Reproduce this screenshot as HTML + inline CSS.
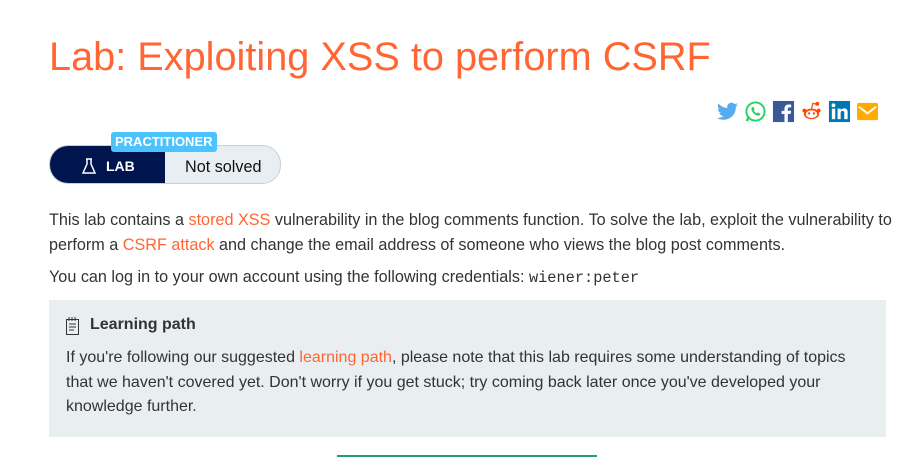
<!DOCTYPE html>
<html><head><style>
body{margin:0;width:906px;height:457px;overflow:hidden;background:#fff;font-family:"Liberation Sans",sans-serif;color:#333;position:relative}
h1{position:absolute;left:49px;top:35px;margin:0;font-weight:normal;font-size:39.7px;color:#ff6633;white-space:nowrap}
.soc{position:absolute;top:100px;left:716px;display:flex;gap:5px}
.soc div{width:23px;height:23px}
.badge{position:absolute;left:49px;top:145px;width:230px;height:37px;border:1px solid #c8ced3;border-radius:19px;background:#e8eef1;overflow:hidden}
.badge .lab{position:absolute;left:0;top:0;width:115px;height:37px;background:#00144d;color:#fff;font-weight:bold;font-size:14px;line-height:40px}
.badge .ns{position:absolute;left:135px;top:3px;line-height:37px;font-size:16.2px;color:#111}
.prac{position:absolute;left:111px;top:132px;background:#4cc3ff;color:#fff;font-weight:bold;font-size:13px;padding:1px 4px;border-radius:3px;line-height:18px}
p{position:absolute;left:49px;margin:0;font-size:16.2px;line-height:24.5px;width:850px}
a{color:#ff6633;text-decoration:none}
.box{position:absolute;left:49px;top:300px;width:837px;height:137px;background:#e9eef1}
.box p{left:17px;width:800px;font-size:16px}
code{font-family:"Liberation Mono",monospace;font-size:15.3px}
</style></head><body>
<h1>Lab: Exploiting XSS to perform CSRF</h1>
<div class="soc">
<div><svg width="23" height="23" viewBox="0 0 24 24"><path fill="#55acee" d="M23 5c-.8.4-1.7.6-2.6.7.9-.6 1.6-1.4 2-2.5-.9.5-1.9.9-2.9 1.1a4.5 4.5 0 0 0-7.7 4.1C8 8.2 4.7 6.4 2.5 3.7c-1.3 2.2-.4 4.7 1.4 6-.7 0-1.4-.2-2-.6 0 2.2 1.6 4 3.6 4.4-.7.2-1.4.2-2 .1.6 1.800 2.3 3.1 4.2 3.1A9 9 0 0 1 1 18.6 12.8 12.8 0 0 0 20.7 7.2c.9-.6 1.7-1.4 2.3-2.2z"/></svg></div>
<div><svg width="23" height="23" viewBox="0 0 24 24"><circle cx="12" cy="12" r="9.5" fill="none" stroke="#25d366" stroke-width="2"/><path d="M3 22l2-5" stroke="#25d366" stroke-width="2.5"/><path fill="#25d366" d="M8.5 7.5c.5-.5 1.2-.5 1.5 0l1 2c.2.4-.5 1-.7 1.3.6 1.300 1.7 2.4 3 3 .3-.2.9-.9 1.3-.7l2 1c.5.3.5 1 0 1.5-1 1-2.5 1-4 .2-2-1-3.5-2.6-4.4-4.5-.6-1.3-.6-2.9.3-3.8z"/></svg></div>
<div><svg width="23" height="23" viewBox="0 0 24 24"><rect x="1" y="1" width="22" height="22" fill="#3b5998"/><path fill="#fff" d="M16.5 23v-8.5h3l.4-3.3h-3.4V9.3c0-1 .3-1.6 1.7-1.6h1.8V4.8c-.3 0-1.4-.1-2.6-.1-2.6 0-4.4 1.6-4.4 4.5v2.1h-3v3.3h3V23z"/></svg></div>
<div><svg width="23" height="23" viewBox="0 0 24 24"><ellipse cx="12" cy="14.5" rx="8" ry="5.5" fill="#ff4500"/><ellipse cx="12" cy="14.8" rx="6" ry="4" fill="#fff"/><circle cx="9.5" cy="14" r="1.2" fill="#ff4500"/><circle cx="14.5" cy="14" r="1.2" fill="#ff4500"/><circle cx="4.5" cy="11" r="2" fill="#ff4500"/><circle cx="19.5" cy="11" r="2" fill="#ff4500"/><circle cx="18" cy="4" r="2" fill="#ff4500"/><path d="M12 9l1.5-5.5 4.5 1" stroke="#ff4500" fill="none" stroke-width="1.3"/></svg></div>
<div><svg width="23" height="23" viewBox="0 0 24 24"><rect x="1" y="1" width="22" height="22" fill="#0077b5"/><rect x="4" y="9" width="3.5" height="11" fill="#fff"/><circle cx="5.7" cy="5.5" r="2" fill="#fff"/><path fill="#fff" d="M10 9h3.3v1.6c.6-1.1 2-1.9 3.6-1.9 3 0 3.6 2 3.6 4.5V20H17v-5.8c0-1.4-.1-2.8-1.8-2.8s-2 1.3-2 2.7V20H10z"/></svg></div>
<div><svg width="23" height="23" viewBox="0 0 24 24"><rect x="1" y="3" width="22" height="18" rx="2" fill="#ffab00"/><path d="M3 7l9 7 9-7" stroke="#fff" stroke-width="2" fill="none"/></svg></div>
</div>
<div class="badge"><div class="lab"><svg style="position:absolute;left:32px;top:12px" width="14" height="16" viewBox="0 0 14 16"><path d="M5 1v5L1 15h12L9 6V1M4 1h6" stroke="#fff" stroke-width="1.5" fill="none"/></svg><span style="position:absolute;left:56px">LAB</span></div><div class="ns">Not solved</div></div>
<div class="prac">PRACTITIONER</div>
<p style="top:208px">This lab contains a <a>stored XSS</a> vulnerability in the blog comments function. To solve the lab, exploit the vulnerability to perform a <a>CSRF attack</a> and change the email address of someone who views the blog post comments.</p>
<p style="top:265px">You can log in to your own account using the following credentials: <code>wiener:peter</code></p>
<div class="box">
<svg style="position:absolute;left:17px;top:17px" width="13" height="18" viewBox="0 0 13 18"><rect x="0.5" y="2.5" width="12" height="15" fill="none" stroke="#333"/><path d="M3 0v4M6 0v4M9 0v4M3 7h7M3 10h7M3 13h5" stroke="#333"/></svg>
<div style="position:absolute;left:41px;top:15px;font-weight:bold;font-size:16px;line-height:20px">Learning path</div>
<p style="top:46px">If you're following our suggested <a>learning path</a>, please note that this lab requires some understanding of topics that we haven't covered yet. Don't worry if you get stuck; try coming back later once you've developed your knowledge further.</p>
</div>
<div style="position:absolute;left:337px;top:455px;width:260px;height:2px;background:#1f9e7b"></div>
</body></html>
